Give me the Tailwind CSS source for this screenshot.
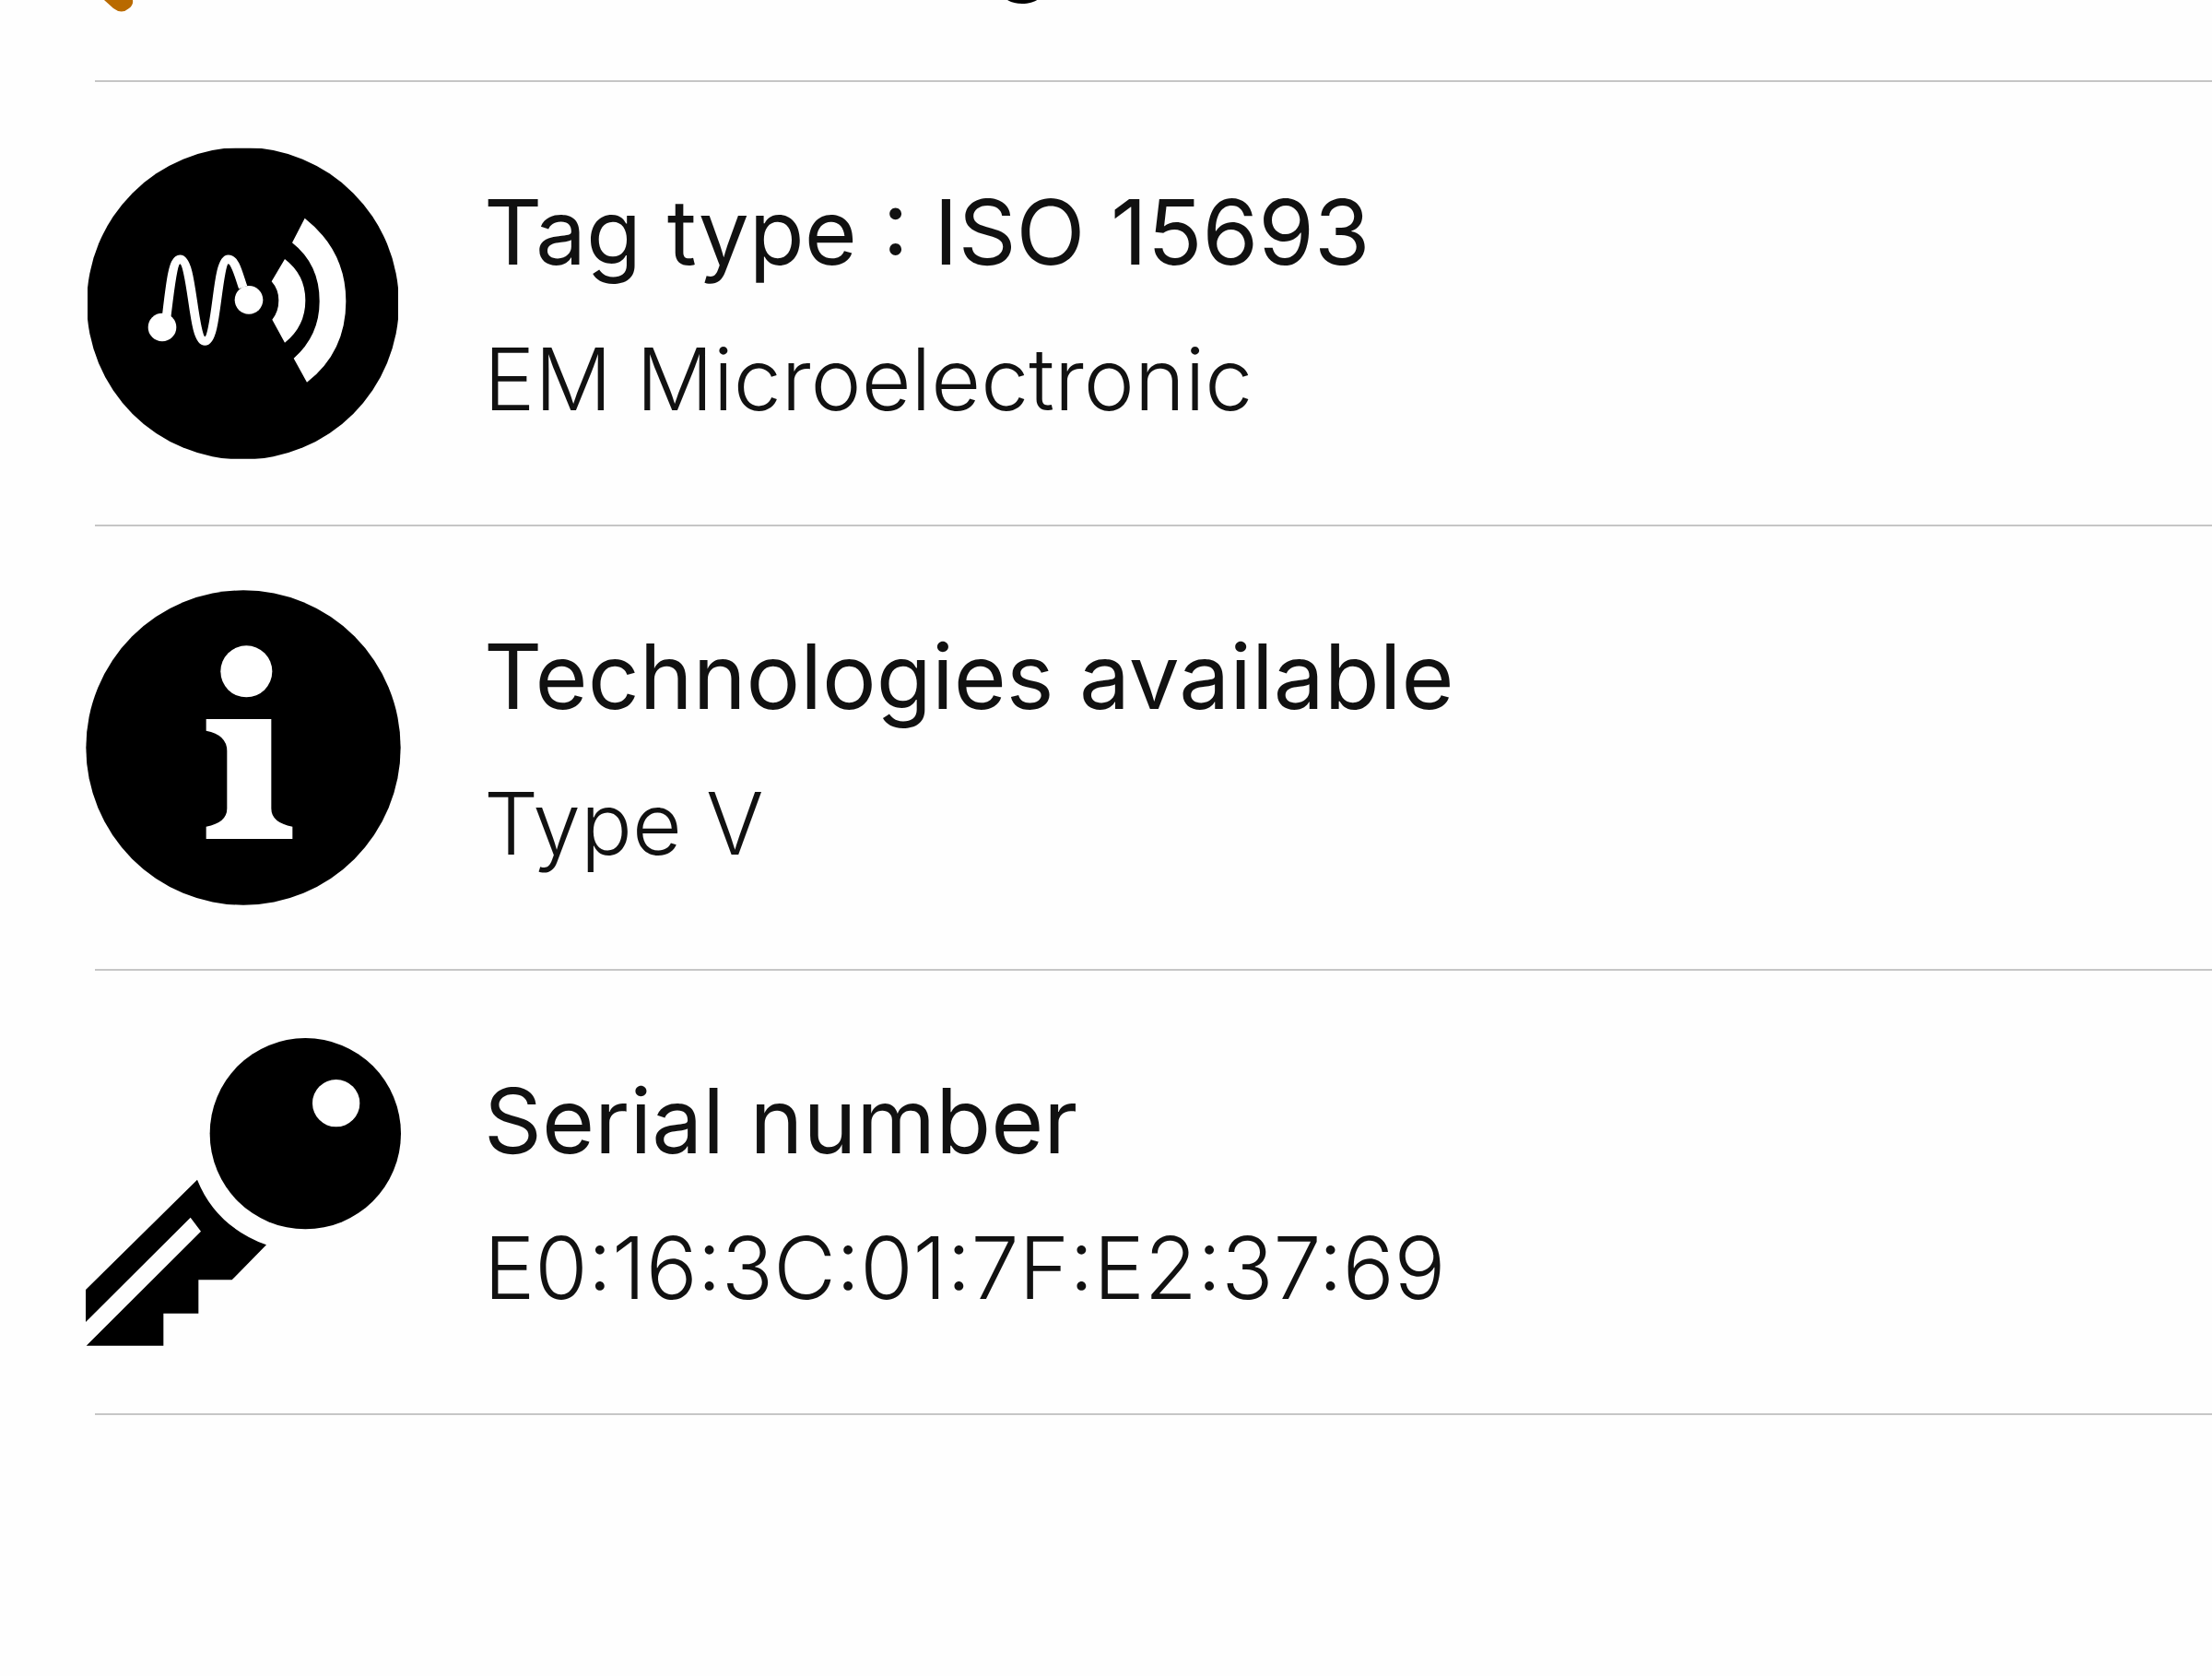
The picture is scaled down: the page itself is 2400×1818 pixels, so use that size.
<!DOCTYPE html>
<html lang="en">
<head>
  <meta charset="UTF-8">
  <meta name="viewport" content="width=device-width, initial-scale=1.0">
  <title>Tag details</title>
  <script src="https://cdn.jsdelivr.net/npm/@tailwindcss/browser@4"></script>
</head>
<body class="bg-[#fefefe] text-[#111111] font-['Inter','Liberation_Sans',sans-serif] min-h-screen">
  <!-- Scrolled-off heading -->
  <header class="h-[87px] overflow-hidden flex items-start pl-[112px]">
    <svg class="w-[34px] h-[13px] shrink-0" viewBox="0 0 34 13" aria-hidden="true">
      <path d="M1 0L11 9Q20 16 28 9Q33 5 32 0Z" fill="#b96a00"/>
    </svg>
    <span class="ml-[934px] -mt-[112px] text-[96px] leading-[120px] font-semibold text-black">g</span>
  </header>
  <hr class="ml-[103px] border-t-2 border-[#c6c6c6]">

  <main>
    <section class="h-[480px] flex items-center gap-[90px] pl-[93px]">
      <svg class="size-[342px] shrink-0" viewBox="38 54 1026 1026" aria-hidden="true">
        <clipPath id="disc"><rect x="44" y="62" width="1011" height="1011"/></clipPath>
        <circle cx="549.5" cy="567.5" r="508" clip-path="url(#disc)"/>
        <path d="M301 610C314 500 322 424 345 424C388 424 384 690 426 690C468 690 462 424 502 424C524 424 532 462 550 515" fill="none" stroke="#fff" stroke-width="29"/>
        <circle cx="287" cy="645" r="46" fill="#fff"/>
        <circle cx="569" cy="556" r="46" fill="#fff"/>
        <path d="M686 423L643 496Q666 522 666 557Q666 594 645 620L686 695Q753 642 753 557Q753 474 686 423Z" fill="#fff"/>
        <path d="M751 290L710 370Q799 440 799 560Q799 672 715 746L758 824Q885 726 885 560Q885 396 751 290Z" fill="#fff"/>
      </svg>
      <div class="pt-2">
        <h2 class="text-[98px] leading-[156px]">Tag type : ISO 15693</h2>
        <p class="text-[93px] leading-[162px] font-light">EM Microelectronic</p>
      </div>
    </section>
    <hr class="ml-[103px] border-t-2 border-[#c6c6c6]">

    <section class="h-[480px] flex items-center gap-[90px] pl-[93px]">
      <svg class="size-[342px] shrink-0" viewBox="38 31 1026 1026" aria-hidden="true">
        <circle cx="551" cy="544" r="512"/>
        <circle cx="561" cy="296" r="84" fill="#fff"/>
        <path d="M430 451H642V742Q642 788 711 801V841H430V801Q498 788 498 742V555Q498 502 430 489Z" fill="#fff"/>
      </svg>
      <div class="pt-2">
        <h2 class="text-[98px] leading-[156px]">Technologies available</h2>
        <p class="text-[93px] leading-[162px] font-light">Type V</p>
      </div>
    </section>
    <hr class="ml-[103px] border-t-2 border-[#c6c6c6]">

    <section class="h-[480px] flex items-center gap-[90px] pl-[93px]">
      <svg class="size-[342px] shrink-0" viewBox="38 36 1026 1026" aria-hidden="true">
        <circle cx="753" cy="359" r="311"/>
        <circle cx="853" cy="260" r="77" fill="#fff"/>
        <path d="M401 509Q462 661 626 721L514 835H405V944H291V1049H40L413 677L379 632L38 972V867Z"/>
      </svg>
      <div class="pt-2">
        <h2 class="text-[98px] leading-[156px]">Serial number</h2>
        <p class="text-[93px] leading-[162px] font-light">E0:16:3C:01:7F:E2:37:69</p>
      </div>
    </section>
    <hr class="ml-[103px] border-t-2 border-[#c6c6c6]">
  </main>
</body>
</html>
